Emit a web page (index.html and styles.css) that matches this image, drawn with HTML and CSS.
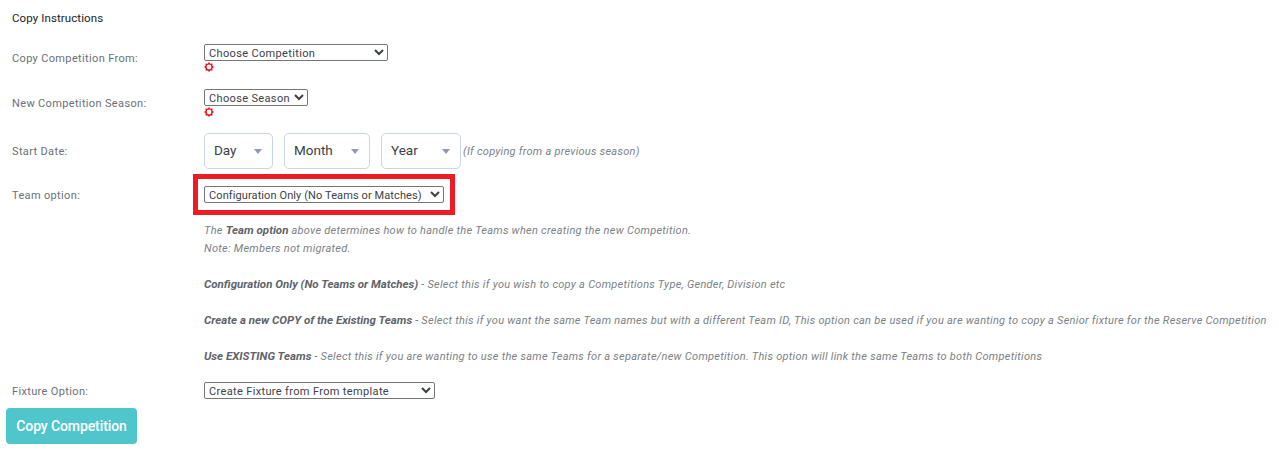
FILE: index.html
```html
<!DOCTYPE html>
<html lang="en">
<head>
    <meta charset="UTF-8" />
    <meta name="viewport" content="width=device-width, initial-scale=1.0" />
    <title>Copy Competition</title>
    <link rel="stylesheet" href="styles.css">
</head>
<body>
    <h1 class="section-title">Copy Instructions</h1>

    <form class="copy-form">
        <div class="form-row row-from">
            <label class="row-label" for="compFrom">Copy Competition From:</label>
            <div class="row-field">
                <select id="compFrom" class="plain-select select-from">
                    <option>Choose Competition</option>
                </select>
                <svg class="req-icon" viewBox="0 0 10 10" width="10" height="10" aria-hidden="true">
                    <polygon points="5,0 6.3,1.7 8.5,1.5 8.4,3.8 10,5 8.4,6.3 8.5,8.5 6.3,8.4 5,10 3.7,8.4 1.5,8.5 1.6,6.3 0,5 1.6,3.8 1.5,1.5 3.7,1.7" fill="#e6101c" />
                    <circle cx="5" cy="5" r="2.4" fill="#fff" />
                </svg>
            </div>
        </div>

        <div class="form-row row-season">
            <label class="row-label" for="season">New Competition Season:</label>
            <div class="row-field">
                <select id="season" class="plain-select select-season">
                    <option>Choose Season</option>
                </select>
                <svg class="req-icon" viewBox="0 0 10 10" width="10" height="10" aria-hidden="true">
                    <polygon points="5,0 6.3,1.7 8.5,1.5 8.4,3.8 10,5 8.4,6.3 8.5,8.5 6.3,8.4 5,10 3.7,8.4 1.5,8.5 1.6,6.3 0,5 1.6,3.8 1.5,1.5 3.7,1.7" fill="#e6101c" />
                    <circle cx="5" cy="5" r="2.4" fill="#fff" />
                </svg>
            </div>
        </div>

        <div class="form-row row-date">
            <label class="row-label" for="day">Start Date:</label>
            <div class="date-fields">
                <span class="date-wrap wrap-day"><select id="day" class="date-select"><option>Day</option></select></span>
                <span class="date-wrap wrap-month"><select class="date-select"><option>Month</option></select></span>
                <span class="date-wrap wrap-year"><select class="date-select"><option>Year</option></select></span>
                <em class="date-hint">(If copying from a previous season)</em>
            </div>
        </div>

        <div class="form-row row-team">
            <label class="row-label" for="teamOption">Team option:</label>
            <div class="row-field">
                <span class="highlight">
                    <select id="teamOption" class="plain-select select-team">
                        <option>Configuration Only (No Teams or Matches)</option>
                    </select>
                </span>
            </div>
        </div>

        <div class="help-text">
            <p>The <strong>Team option</strong> above determines how to handle the Teams when creating the new Competition.<br>Note: Members not migrated.</p>
            <p><strong>Configuration Only (No Teams or Matches)</strong> - Select this if you wish to copy a Competitions Type, Gender, Division etc</p>
            <p><strong>Create a new COPY of the Existing Teams</strong> - Select this if you want the same Team names but with a different Team ID, This option can be used if you are wanting to copy a Senior fixture for the Reserve Competition</p>
            <p><strong>Use EXISTING Teams</strong> - Select this if you are wanting to use the same Teams for a separate/new Competition. This option will link the same Teams to both Competitions</p>
        </div>

        <div class="form-row row-fixture">
            <label class="row-label" for="fixture">Fixture Option:</label>
            <div class="row-field">
                <select id="fixture" class="plain-select select-fixture">
                    <option>Create Fixture from From template</option>
                </select>
            </div>
        </div>

        <button type="submit" class="copy-btn">Copy Competition</button>
    </form>
</body>
</html>
```

FILE: styles.css
```css
body {
    font-family: Roboto, 'Liberation Sans', sans-serif;
    font-size: 11px;
    margin: 0;
    background-color: #fff;
    color: #6b6f76;
    overflow: hidden;
}
.section-title {
    margin: 11px 0 0 12px;
    font-size: 11.5px;
    line-height: 14px;
    font-weight: 400;
    letter-spacing: 0.1px;
    color: #222;
}
.form-row {
    display: flex;
    padding-left: 12px;
}
.row-label {
    width: 192px;
    flex: none;
    letter-spacing: 0.35px;
    line-height: 14px;
}
.row-field {
    display: flex;
    flex-direction: column;
    align-items: flex-start;
}
.row-from {
    margin-top: 19px;
}
.row-from .row-label {
    padding-top: 8px;
}
.row-season {
    margin-top: 17px;
}
.row-season .row-label {
    padding-top: 8px;
}
.row-date {
    margin-top: 16px;
    align-items: center;
}
.row-date .row-label {
    padding-top: 2px;
}
.row-team {
    margin-top: 17px;
}
.row-team .row-label {
    padding-top: 3px;
}
.row-fixture {
    margin-top: 16px;
}
.row-fixture .row-label {
    padding-top: 3px;
}
.plain-select {
    font-family: Roboto, 'Liberation Sans', sans-serif;
    font-size: 11px;
    letter-spacing: 0.35px;
    height: 17px;
    padding: 1px 0 0;
    background-color: #fff;
    color: #3c4148;
    border: 1px solid #767676;
    border-radius: 2px;
}
.select-from {
    width: 184px;
}
.select-season {
    width: 104px;
}
.select-team {
    width: 240px;
    letter-spacing: 0.1px;
}
.select-fixture {
    width: 231px;
}
.req-icon {
    display: block;
    margin-top: 1px;
}
.date-fields {
    display: flex;
    align-items: center;
}
.date-wrap {
    position: relative;
    display: block;
    margin-right: 11px;
}
.date-wrap::after {
    content: "";
    position: absolute;
    right: 11px;
    top: 16px;
    border-left: 4px solid transparent;
    border-right: 4px solid transparent;
    border-top: 5px solid #8a9db5;
}
.wrap-day { width: 69px; }
.wrap-month { width: 86px; }
.wrap-year { width: 80px; margin-right: 2px; }
.date-select {
    appearance: none;
    display: block;
    width: 100%;
    height: 36px;
    padding: 0 0 2px 9px;
    font-family: Roboto, 'Liberation Sans', sans-serif;
    font-size: 13.5px;
    color: #3c4148;
    background-color: #fff;
    border: 1px solid #c6d6e6;
    border-radius: 5px;
}
.date-hint {
    color: #7b7f86;
    letter-spacing: 0.25px;
}
.highlight {
    position: relative;
    display: block;
}
.highlight::after {
    content: "";
    position: absolute;
    left: -11px;
    right: -11px;
    top: -12px;
    bottom: -12px;
    border: 5px solid #ed1c24;
}
.help-text {
    margin: 19px 0 0 204px;
    font-style: italic;
    line-height: 18px;
    color: #7b7f86;
    letter-spacing: 0.27px;
    white-space: nowrap;
}
.help-text p {
    margin: 0 0 18px;
}
.help-text p:last-child {
    margin-bottom: 0;
}
.help-text strong {
    color: #5f636a;
    font-size: 11.5px;
    line-height: 1;
    letter-spacing: 0;
}
.copy-btn {
    display: block;
    width: 131px;
    height: 36px;
    margin: 9px 0 0 6px;
    padding: 0;
    font-family: Roboto, 'Liberation Sans', sans-serif;
    font-size: 14px;
    font-weight: 500;
    letter-spacing: -0.1px;
    color: #fff;
    background-color: #4fc6cb;
    border: none;
    border-radius: 4px;
    cursor: pointer;
}
```
